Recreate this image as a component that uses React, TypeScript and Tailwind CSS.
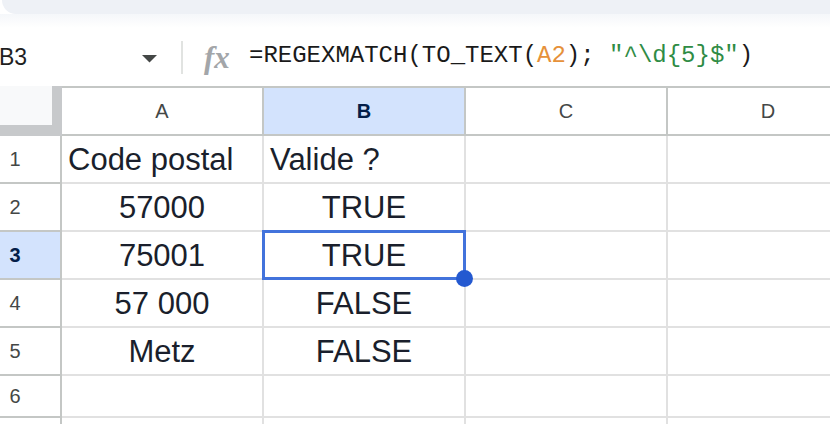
import React from 'react'

const rows = [
  { n: '1', a: 'Code postal', b: 'Valide ?', left: true },
  { n: '2', a: '57000', b: 'TRUE' },
  { n: '3', a: '75001', b: 'TRUE', selected: true },
  { n: '4', a: '57 000', b: 'FALSE' },
  { n: '5', a: 'Metz', b: 'FALSE' },
]

const cols = ['A', 'B', 'C', 'D']

function DataCell({ text, left }: { text?: string; left?: boolean }) {
  return (
    <div
      className={`w-[202px] shrink-0 h-full border-r-2 border-b-2 border-[#e1e1e1] flex items-center text-[31px] leading-none text-[#1a1f2c] ${
        left ? 'justify-start pl-[6px]' : 'justify-center'
      }`}
    >
      {text}
    </div>
  )
}

function RowHead({ n, selected }: { n: string; selected?: boolean }) {
  return (
    <div
      className={`w-[62px] shrink-0 h-full border-r-2 border-b-2 border-[#c4c7c5] flex items-center ${
        selected ? 'bg-[#d3e3fd] text-[#041e49] font-bold' : 'bg-white text-[#444746]'
      }`}
    >
      <span className="w-[30px] text-center text-[20px] leading-none">{n}</span>
    </div>
  )
}

export default function App() {
  return (
    <div
      className="w-[830px] h-[424px] overflow-hidden bg-white relative"
      style={{ fontFamily: '"Liberation Sans", Arial, sans-serif' }}
    >
      {/* toolbar edge */}
      <div className="h-[14px] bg-[#eef1f6] rounded-bl-[18px] ml-[2px]" />
      <div className="h-[14px] bg-gradient-to-b from-[#f5f7fa] to-white" />

      {/* formula bar */}
      <div className="h-[58px] flex items-center">
        <div className="w-[143px] shrink-0 text-[23px] leading-none text-[#1f1f1f] -ml-[1px] mt-[1px]">B3</div>
        <svg width="15" height="8" viewBox="0 0 15 8" className="shrink-0 mt-[3px]">
          <polygon points="0,0 15,0 7.5,7.5" fill="#444746" />
        </svg>
        <div className="ml-[24px] w-[2px] h-[33px] bg-[#e1e3e1] shrink-0" />
        <div
          className="ml-[21px] w-[45px] shrink-0 text-[31px] leading-none italic font-bold text-[#a3a6a9]"
          style={{ fontFamily: '"Liberation Serif", "Times New Roman", serif' }}
        >
          fx
        </div>
        <div
          className="text-[24px] leading-none text-[#1a1a1a] whitespace-pre -mt-[3px]"
          style={{ fontFamily: '"Liberation Mono", "Courier New", monospace' }}
        >
          =REGEXMATCH(TO_TEXT(<span className="text-[#e6913a]">A2</span>);{' '}
          <span className="text-[#2f8c45]">"^\d{'{'}5{'}'}$"</span>)
        </div>
      </div>

      {/* grid */}
      <div className="relative">
        {/* column header row */}
        <div className="flex h-[50px]">
          <div className="w-[62px] shrink-0 h-full bg-[#c7c9cb]">
            <div className="w-[52px] h-[39px] bg-[#f8f9fa]" />
          </div>
          {cols.map((c) => (
            <div
              key={c}
              className={`w-[202px] shrink-0 h-full border-t-2 border-b-2 border-r-2 border-[#c4c7c5] flex items-center justify-center text-[20px] leading-none ${
                c === 'B' ? 'bg-[#d3e3fd] text-[#041e49] font-bold' : 'bg-white text-[#444746]'
              }`}
            >
              {c}
            </div>
          ))}
        </div>

        {rows.map((r) => (
          <div key={r.n} className="flex h-[48px]">
            <RowHead n={r.n} selected={r.selected} />
            <DataCell text={r.a} left={r.left} />
            <DataCell text={r.b} left={r.left} />
            <DataCell />
            <DataCell />
          </div>
        ))}

        <div className="flex h-[42px]">
          <RowHead n="6" />
          <DataCell />
          <DataCell />
          <DataCell />
          <DataCell />
        </div>
        <div className="flex h-[20px]">
          <div className="w-[62px] shrink-0 h-full border-r-2 border-[#c4c7c5]" />
          <div className="w-[202px] shrink-0 h-full border-r-2 border-[#e1e1e1]" />
          <div className="w-[202px] shrink-0 h-full border-r-2 border-[#e1e1e1]" />
          <div className="w-[202px] shrink-0 h-full border-r-2 border-[#e1e1e1]" />
        </div>

        {/* selection of B3 */}
        <div className="absolute left-[262px] top-[144px] w-[204px] h-[50px] border-[3px] border-[#4273dc] pointer-events-none" />
        <div className="absolute left-[456px] top-[184px] w-[17px] h-[17px] rounded-full bg-[#2459d0]" />
      </div>
    </div>
  )
}
